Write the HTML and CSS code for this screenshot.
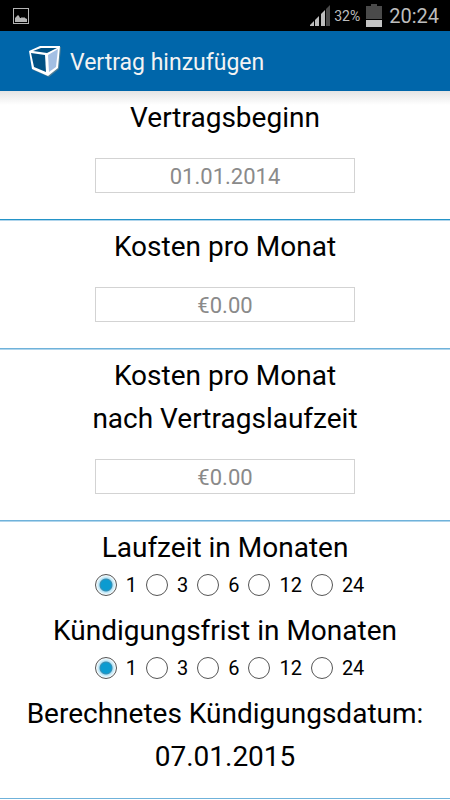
FILE: index.html
```
<!DOCTYPE html>
<html lang="de">
<head>
    <meta charset="UTF-8">
    <meta name="viewport" content="width=device-width, initial-scale=1.0">
    <title>Vertrag hinzufügen</title>
    <link rel="stylesheet" href="styles.css">
</head>
<body>
    <div class="status-bar">
        <svg class="status-picture" width="16" height="16" viewBox="0 0 16 16">
            <rect x="0.5" y="0.5" width="15" height="15" fill="none" stroke="#b4b4b4"/>
            <path d="M2 14V10L4 8L5 7L6 8L7 10L8 10L9 9L10 10L11 9L12 10L14 11V14Z" fill="#b4b4b4"/>
        </svg>
        <div class="status-right">
            <svg width="20" height="21" viewBox="0 0 20 21">
                <path d="M0 21V20L4 16V21Z" fill="#bdbdbd"/>
                <path d="M5 21V15L9 11V21Z" fill="#bdbdbd"/>
                <path d="M11 21V9L15 5V21Z" fill="#bdbdbd"/>
                <path d="M16 21V4L20 0V21Z" fill="#4a4a4a"/>
            </svg>
            <span class="percent">32%</span>
            <svg class="battery" width="16" height="23" viewBox="0 0 16 23">
                <path d="M0 2H5V0H11V2H16V15H0Z" fill="#4a4a4a"/>
                <rect x="0" y="16" width="16" height="7" fill="#c4c4c4"/>
            </svg>
            <span class="clock">20:24</span>
        </div>
    </div>

    <header class="header">
        <svg width="33" height="32" viewBox="0 0 33 32">
            <path d="M2 7L12 2H32L30 24L20 32L4 25Z" fill="#4c7d96"/>
            <path d="M0 6L11 1H31L29 23L19 31L3 24Z" fill="#fff"/>
            <path d="M4 6L12 3H28L18 8Z" fill="#005184"/>
            <path d="M2 8L16 10L17 27L5 22Z" fill="#005184"/>
            <path d="M19 10L29 4L27 22L20 27Z" fill="#a3bfe3"/>
        </svg>
        <h1>Vertrag hinzufügen</h1>
    </header>

    <form id="contract-form">
        <div class="section first">
            <label class="title" for="start-date">Vertragsbeginn</label>
            <input type="text" id="start-date" name="start-date" placeholder="01.01.2014">
        </div>
        <div class="section">
            <label class="title" for="cost">Kosten pro Monat</label>
            <input type="text" id="cost" name="cost" placeholder="€0.00">
        </div>
        <div class="section">
            <label class="title" for="cost-after">Kosten pro Monat<br>nach Vertragslaufzeit</label>
            <input type="text" id="cost-after" name="cost-after" placeholder="€0.00">
        </div>
        <div class="section">
            <h2 class="title" id="duration-title">Laufzeit in Monaten</h2>
            <div class="options" role="radiogroup" aria-labelledby="duration-title">
                <label><input type="radio" name="duration" value="1" checked>1</label>
                <label><input type="radio" name="duration" value="3">3</label>
                <label><input type="radio" name="duration" value="6">6</label>
                <label><input type="radio" name="duration" value="12">12</label>
                <label><input type="radio" name="duration" value="24">24</label>
            </div>
            <h2 class="title" id="notice-title">Kündigungsfrist in Monaten</h2>
            <div class="options" role="radiogroup" aria-labelledby="notice-title">
                <label><input type="radio" name="notice" value="1" checked>1</label>
                <label><input type="radio" name="notice" value="3">3</label>
                <label><input type="radio" name="notice" value="6">6</label>
                <label><input type="radio" name="notice" value="12">12</label>
                <label><input type="radio" name="notice" value="24">24</label>
            </div>
            <h2 class="title">Berechnetes Kündigungsdatum:</h2>
            <output class="title">07.01.2015</output>
        </div>
    </form>
</body>
</html>
```
FILE: styles.css
```
body {
    margin: 0;
    font-family: Roboto, sans-serif;
    background-color: #fff;
    color: #000;
}
.status-bar {
    display: flex;
    justify-content: space-between;
    align-items: center;
    height: 31px;
    padding: 0 11px 0 13px;
    background-color: #000;
    color: #bdbdbd;
}
.status-right {
    display: flex;
    align-items: center;
}
.percent {
    margin: 0 6px 0 4px;
    font-size: 14px;
}
.clock {
    margin-left: 7px;
    font-size: 20px;
}
.header {
    display: flex;
    align-items: center;
    gap: 8px;
    height: 60px;
    padding-left: 29px;
    background-color: #0066aa;
}
.header h1 {
    margin: 0;
    padding-top: 2px;
    font-size: 23px;
    font-weight: 400;
    color: #f3f3f3;
}
.section {
    padding: 5px 0 26px;
    border-bottom: 1px solid #6fb2da;
    box-shadow: 0 1px 0 #b0d5ec;
    text-align: center;
}
.section.first {
    border-bottom-color: #2494c8;
    background-image: linear-gradient(#e4e4e4, #fff 14px);
}
.section:last-child {
    padding-bottom: 20px;
}
.title {
    display: block;
    margin: 0;
    font-size: 28px;
    font-weight: 400;
    line-height: 43px;
}
input[type="text"] {
    display: block;
    box-sizing: border-box;
    width: 260px;
    height: 35px;
    margin: 19px auto 0;
    padding: 2px 0 0;
    border: 1px solid #d3d3d3;
    background-color: #fff;
    font-family: inherit;
    font-size: 22px;
    text-align: center;
}
input::placeholder {
    color: #8a8a8a;
}
.options {
    display: flex;
    justify-content: center;
    gap: 9px;
    padding: 5px 0 13px 9px;
}
.options label {
    display: flex;
    align-items: center;
    gap: 9px;
    font-size: 20px;
    line-height: 22px;
}
input[type="radio"] {
    appearance: none;
    box-sizing: border-box;
    width: 22px;
    height: 22px;
    margin: 0;
    border: 1px solid #555;
    border-radius: 50%;
    background-color: #fff;
}
input[type="radio"]:checked {
    background-image: radial-gradient(circle, #0c9bd0 5px, #3d8fb3 6px, #b5e3f5 7px, #fff 10px);
}
```
